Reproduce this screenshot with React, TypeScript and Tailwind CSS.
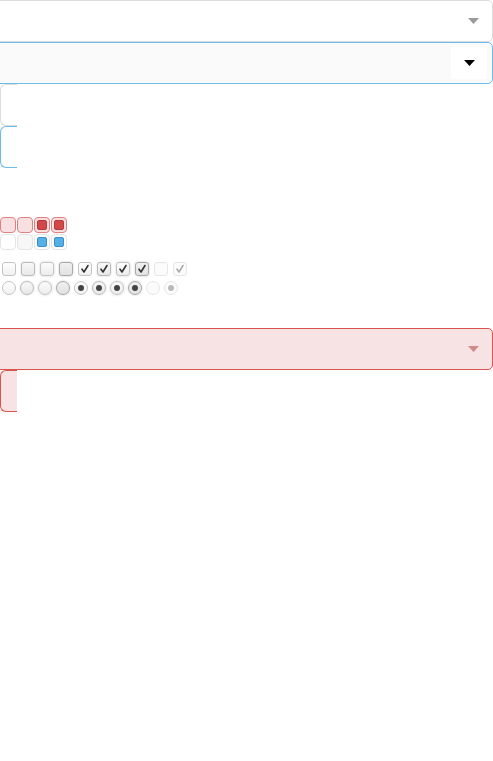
import React from "react";

const Arrow = ({ color }: { color: string }) => (
  <svg width="11" height="6" viewBox="0 0 11 6" className="block">
    <path d="M0 0 L11 0 L5.5 6 Z" fill={color} />
  </svg>
);

const Check = () => (
  <svg width="10" height="10" viewBox="0 0 10 10" className="block">
    <path d="M2 5.2 L4 8 L8 1.5" stroke="#333" strokeWidth="1.6" fill="none" strokeLinecap="round" strokeLinejoin="round" />
  </svg>
);

const styles = [
  "border-[#c4c4c4] bg-gradient-to-b from-white to-[#f0f0f0]",
  "border-[#bbb] bg-gradient-to-b from-[#f8f8f8] to-[#e8e8e8] shadow-[0_0_2px_rgba(0,0,0,0.2)]",
  "border-[#c4c4c4] bg-gradient-to-b from-[#fcfcfc] to-[#ececec] shadow-[0_0_3px_rgba(0,0,0,0.18)]",
  "border-[#aaa] bg-gradient-to-b from-[#f0f0f0] to-[#e2e2e2] shadow-[0_0_2px_rgba(0,0,0,0.25)]",
  "border-[#e6e6e6] bg-[#fbfbfb]",
];

function CB({ variant, checked }: { variant: number; checked?: boolean }) {
  return (
    <div className={`w-[14px] h-[14px] rounded-[3px] border flex items-center justify-center ${styles[variant]}`}>
      {checked && (variant === 4 ? <span className="opacity-40"><Check /></span> : <Check />)}
    </div>
  );
}

function RD({ variant, checked }: { variant: number; checked?: boolean }) {
  return (
    <div className={`w-[14px] h-[14px] rounded-full border flex items-center justify-center ${styles[variant]}`}>
      {checked && <div className={`w-[6px] h-[6px] rounded-full ${variant === 4 ? "bg-[#bbb]" : "bg-[#444]"}`} />}
    </div>
  );
}

export default function App() {
  return (
    <div className="w-[493px] h-[761px] bg-white overflow-hidden font-['Liberation_Sans',sans-serif]">
      {/* select default */}
      <div className="-ml-2 h-[42px] border border-[#dcdcdc] rounded-[5px] bg-white flex items-center justify-end pr-[13px]">
        <Arrow color="#9a9a9a" />
      </div>
      {/* select focused */}
      <div className="-ml-2 h-[42px] border border-[#6cbbe8] rounded-[5px] bg-[#fafafa] flex items-stretch justify-end">
        <div className="w-[36px] bg-white flex items-center justify-center mr-[5px] my-[4px]">
          <Arrow color="#000" />
        </div>
      </div>
      {/* small boxes */}
      <div className="w-[17px] h-[42px] border border-r-0 border-[#dcdcdc] rounded-l-[6px]" />
      <div className="w-[17px] h-[42px] border border-r-0 border-[#6cbbe8] rounded-l-[6px]" />

      {/* colored boxes */}
      <div className="mt-[49px] flex flex-col gap-px">
        <div className="flex gap-px">
          <div className="w-[16px] h-[16px] rounded-[4px] border border-[#e08080] bg-[#f9e0e0]" />
          <div className="w-[16px] h-[16px] rounded-[4px] border border-[#e08080] bg-[#f9e0e0]" />
          <div className="w-[16px] h-[16px] rounded-[4px] border border-[#e08080] bg-[#f9e0e0] flex items-center justify-center">
            <div className="w-[10px] h-[10px] rounded-[2px] bg-[#d24848] border border-[#b83a3a]" />
          </div>
          <div className="w-[16px] h-[16px] rounded-[4px] border border-[#e08080] bg-[#f9e0e0] flex items-center justify-center">
            <div className="w-[10px] h-[10px] rounded-[2px] bg-[#d24848] border border-[#b83a3a]" />
          </div>
        </div>
        <div className="flex gap-px">
          <div className="w-[16px] h-[16px] rounded-[4px] border border-[#e4e4e4] bg-white" />
          <div className="w-[16px] h-[16px] rounded-[4px] border border-[#e4e4e4] bg-[#f7f7f7]" />
          <div className="w-[16px] h-[16px] rounded-[4px] border border-[#e4e4e4] bg-white flex items-center justify-center">
            <div className="w-[10px] h-[10px] rounded-[2px] bg-[#55b0e8] border border-[#3a8fc8]" />
          </div>
          <div className="w-[16px] h-[16px] rounded-[4px] border border-[#e4e4e4] bg-white flex items-center justify-center">
            <div className="w-[10px] h-[10px] rounded-[2px] bg-[#55b0e8] border border-[#3a8fc8]" />
          </div>
        </div>
      </div>

      {/* checkboxes */}
      <div className="mt-[12px] ml-[2px] flex gap-[5px]">
        <CB variant={0} />
        <CB variant={1} />
        <CB variant={2} />
        <CB variant={3} />
        <CB variant={0} checked />
        <CB variant={1} checked />
        <CB variant={2} checked />
        <CB variant={3} checked />
        <CB variant={4} />
        <CB variant={4} checked />
      </div>
      <div className="mt-[5px] ml-[2px] flex gap-[4px]">
        <RD variant={0} />
        <RD variant={1} />
        <RD variant={2} />
        <RD variant={3} />
        <RD variant={0} checked />
        <RD variant={1} checked />
        <RD variant={2} checked />
        <RD variant={3} checked />
        <RD variant={4} />
        <RD variant={4} checked />
      </div>

      {/* error select */}
      <div className="mt-[33px] -ml-2 h-[42px] border border-[#d9534f] rounded-[5px] bg-[#f7e3e3] flex items-center justify-end pr-[13px]">
        <Arrow color="#d08a8a" />
      </div>
      <div className="w-[17px] h-[42px] border border-r-0 border-[#d9534f] rounded-l-[6px] bg-[#f7e3e3]" />
    </div>
  );
}
